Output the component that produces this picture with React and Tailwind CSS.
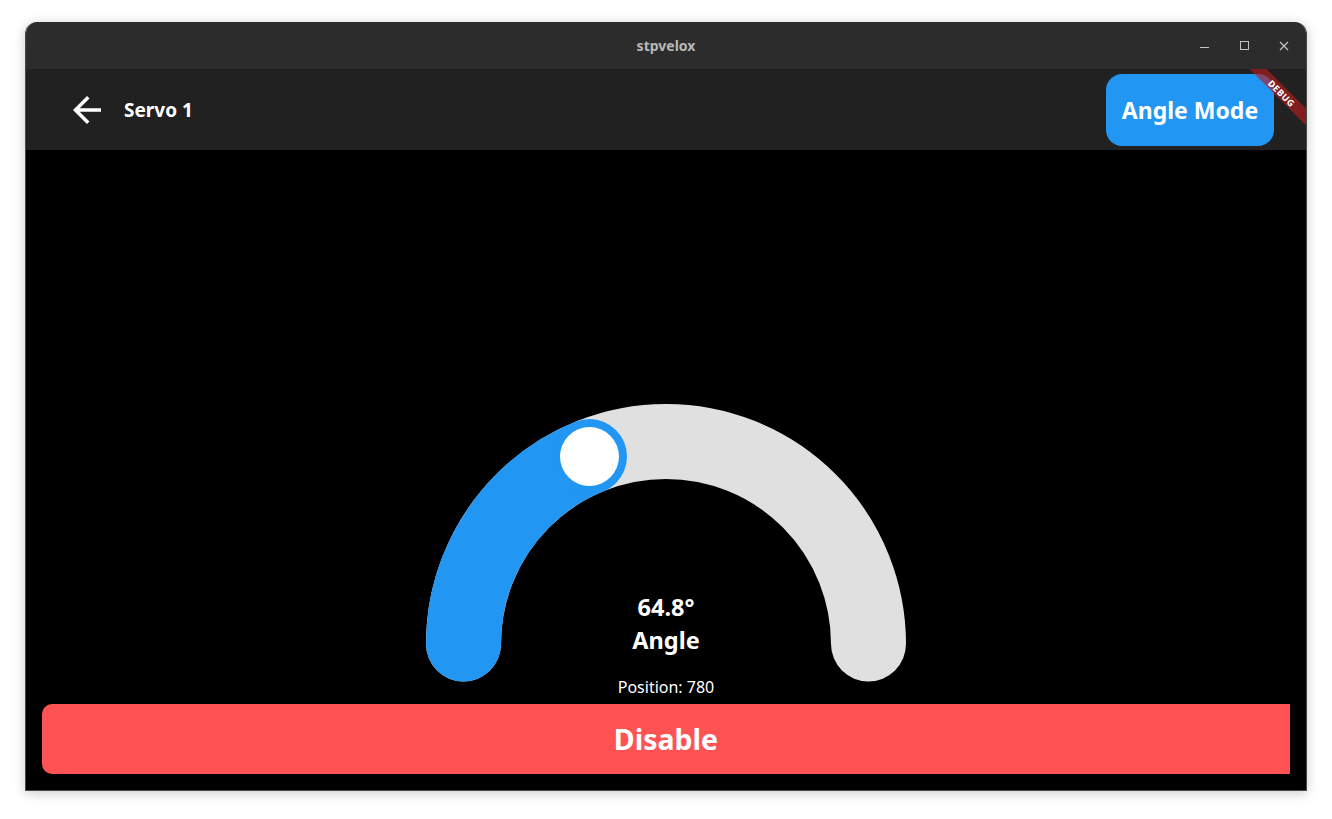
import React from "react";

const FONT = { fontFamily: '"Noto Sans", "Open Sans", sans-serif' };

function Gauge() {
  const cx = 240, cy = 240, r = 202.5;
  const deg = 67.8;
  const a = (deg * Math.PI) / 180;
  const tx = cx - r * Math.cos(a);
  const ty = cy - r * Math.sin(a);
  return (
    <div className="relative w-[480px] h-[300px] shrink-0">
      <svg width="480" height="282" viewBox="0 0 480 282" className="block">
        <path
          d={`M ${cx - r} ${cy} A ${r} ${r} 0 0 1 ${cx + r} ${cy}`}
          fill="none"
          stroke="#e0e0e0"
          strokeWidth="75"
          strokeLinecap="round"
        />
        <path
          d={`M ${cx - r} ${cy} A ${r} ${r} 0 0 1 ${tx} ${ty}`}
          fill="none"
          stroke="#2196f3"
          strokeWidth="75"
          strokeLinecap="round"
        />
        <circle cx={tx} cy={ty} r="36.5" fill="#2196f3" />
        <circle cx={tx} cy={ty} r="29.5" fill="#ffffff" />
      </svg>
      <div className="absolute left-0 right-0 top-[187px] flex flex-col items-center text-white">
        <div className="text-[23.5px] font-bold leading-[32px]">64.8°</div>
        <div className="text-[23.5px] font-bold leading-[34px]">Angle</div>
        <div className="text-[16px] leading-[22px] mt-[19px]">Position: 780</div>
      </div>
    </div>
  );
}

export default function App() {
  return (
    <div className="w-[1332px] h-[819px] bg-white pt-[22px] pl-[25px]" style={FONT}>
      <div className="w-[1282px] h-[769px] rounded-t-[12px] overflow-hidden flex flex-col border-x border-b border-[#4a4a4a] shadow-[0_2px_12px_rgba(0,0,0,0.22)]">
        {/* title bar */}
        <div className="relative h-[47px] shrink-0 bg-[#2c2c2c] flex items-center justify-center">
          <span className="text-[14px] font-bold text-[#b8b8b8]">stpvelox</span>
          <div className="absolute right-[13px] top-0 h-full flex items-center gap-[22px]">
            <div className="w-[18px] h-[18px] flex items-center justify-center">
              <div className="w-[9px] h-[1px] bg-[#c4c4c4] mt-[4px]" />
            </div>
            <div className="w-[18px] h-[18px] flex items-center justify-center">
              <div className="w-[9px] h-[9px] border border-[#c4c4c4]" />
            </div>
            <div className="w-[18px] h-[18px] flex items-center justify-center">
              <svg width="10" height="10" viewBox="0 0 10 10">
                <path d="M1 1L9 9M9 1L1 9" stroke="#c4c4c4" strokeWidth="1.2" />
              </svg>
            </div>
          </div>
        </div>
        {/* app bar */}
        <div className="relative h-[81px] shrink-0 bg-[#212121] flex items-center pl-[40px] pr-[32px]">
          <svg width="42" height="42" viewBox="0 0 24 24" className="shrink-0">
            <path
              d="M20 11H7.83l5.59-5.59L12 4l-8 8 8 8 1.41-1.41L7.83 13H20v-2z"
              fill="#ffffff"
            />
          </svg>
          <span className="ml-[16px] pt-[2px] text-[19px] font-bold text-white">Servo 1</span>
          <div className="flex-1" />
          <button className="h-[72px] w-[168px] pt-[2px] rounded-[16px] bg-[#2196f3] text-white text-[23px] font-bold">
            Angle Mode
          </button>
          <div className="absolute top-0 right-0 w-[60px] h-[60px] overflow-hidden pointer-events-none">
            <div className="absolute left-[-24px] top-[18px] w-[120px] h-[12px] rotate-45 bg-[rgba(183,28,28,0.63)] flex items-center justify-center">
              <span className="text-[9px] font-bold text-white leading-none tracking-[0.5px]">DEBUG</span>
            </div>
          </div>
        </div>
        {/* body */}
        <div className="flex-1 bg-black flex flex-col items-center justify-end px-[16px] pb-[16px]">
          <Gauge />
          <button className="w-full h-[70px] shrink-0 rounded-l-[10px] bg-[#ff5252] text-white text-[28.5px] font-bold">
            Disable
          </button>
        </div>
      </div>
    </div>
  );
}
